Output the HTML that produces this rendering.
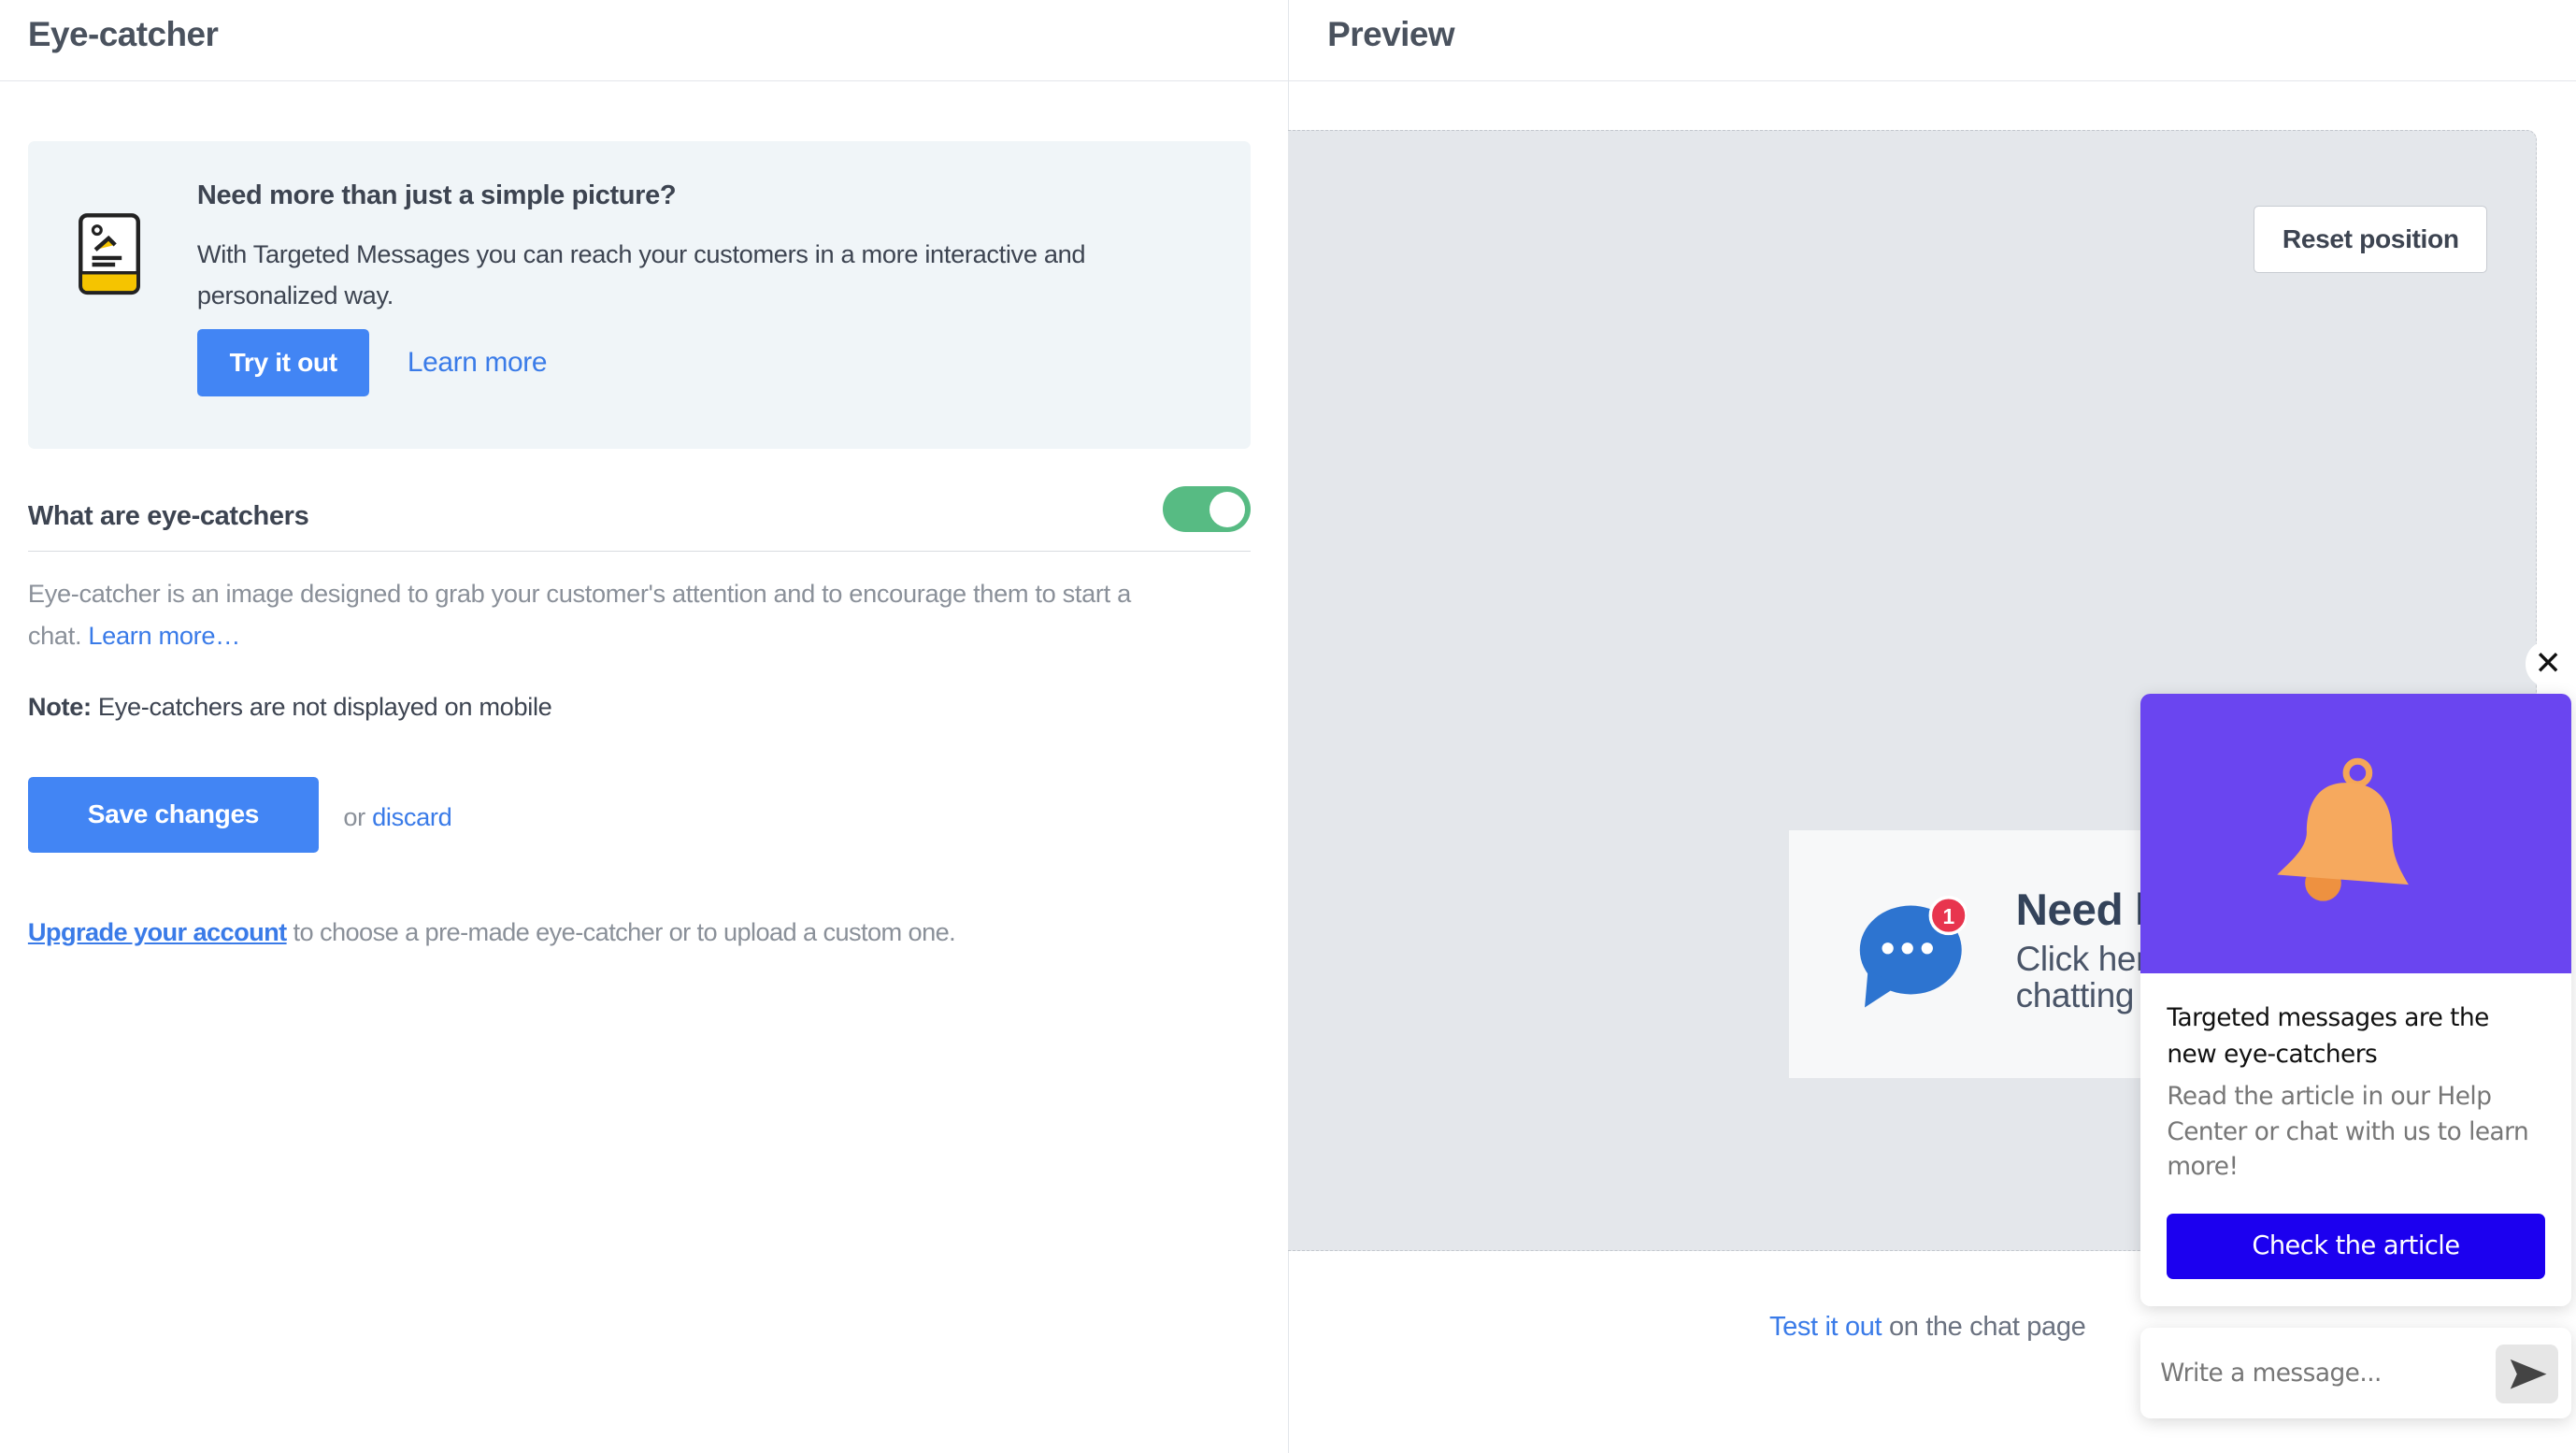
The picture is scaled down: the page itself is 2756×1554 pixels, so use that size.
<!DOCTYPE html>
<html><head><meta charset="utf-8"><style>
*{box-sizing:border-box;margin:0;padding:0}
html,body{width:2756px;height:1554px;overflow:hidden;background:#fff}
#r{zoom:1.75765;width:1568px;height:884px;position:relative;font-family:"Liberation Sans",sans-serif;color:#3d4451;letter-spacing:-.2px}
.a{position:absolute}
.t{font-size:21px;font-weight:bold;color:#4a525e;letter-spacing:-.3px}
.blue{color:#3a7be8}
</style></head><body><div id="r">
<div class="a" style="left:0;top:49px;width:1568px;border-top:1px solid #e3e6ea"></div>
<div class="a" style="left:784px;top:0;height:884px;border-left:1px solid #e3e6ea"></div>
<div class="a t" style="left:17px;top:9px">Eye-catcher</div>
<div class="a t" style="left:808px;top:9px">Preview</div>

<div class="a" style="left:17px;top:86px;width:744px;height:187px;background:#f0f5f8;border-radius:4px"></div>
<svg class="a" style="left:46px;top:128px" width="42" height="52" viewBox="0 0 42 52"><rect x="3" y="3" width="35" height="47" rx="4" fill="#fff" stroke="#222" stroke-width="2.5"/><path d="M4 38h33v8a3 3 0 0 1-3 3H7a3 3 0 0 1-3-3z" fill="#f5c400"/><path d="M4 38h33" stroke="#222" stroke-width="2"/><circle cx="13" cy="12" r="2.5" fill="none" stroke="#222" stroke-width="1.8"/><path d="M12 24l8-7 4 4" stroke="#222" stroke-width="2.5" fill="#f5c400"/><path d="M10 29h18M10 33h14" stroke="#222" stroke-width="2.5"/></svg>
<div class="a" style="left:120px;top:110px;font-size:16.5px;font-weight:bold;color:#3d4451">Need more than just a simple picture?</div>
<div class="a" style="left:120px;top:142px;width:600px;font-size:15.5px;line-height:25px">With Targeted Messages you can reach your customers in a more interactive and personalized way.</div>
<div class="a" style="left:120px;top:200px;width:105px;height:41px;background:#4285f4;border-radius:3px;color:#fff;font-size:16px;font-weight:bold;text-align:center;line-height:41px">Try it out</div>
<div class="a blue" style="left:248px;top:211px;font-size:17px">Learn more</div>

<div class="a" style="left:17px;top:305px;font-size:16.5px;font-weight:bold">What are eye-catchers</div>
<div class="a" style="left:708px;top:296px;width:53px;height:28px;border-radius:14px;background:#57bb83"><div class="a" style="right:3px;top:3px;width:22px;height:22px;border-radius:50%;background:#fff"></div></div>
<div class="a" style="left:17px;top:335px;width:744px;border-top:1px solid #d8dce0"></div>
<div class="a" style="left:17px;top:348px;width:695px;font-size:15.5px;line-height:26px;color:#8a9099">Eye-catcher is an image designed to grab your customer's attention and to encourage them to start a chat. <span class="blue">Learn more…</span></div>
<div class="a" style="left:17px;top:421px;font-size:15.5px"><b>Note:</b> Eye-catchers are not displayed on mobile</div>
<div class="a" style="left:17px;top:473px;width:177px;height:46px;background:#4285f4;border-radius:3px;color:#fff;font-size:16px;font-weight:bold;text-align:center;line-height:46px">Save changes</div>
<div class="a" style="left:209px;top:488px;font-size:15.5px;color:#8a9099">or <span class="blue">discard</span></div>
<div class="a" style="left:17px;top:558px;font-size:15.5px;color:#8a9099;letter-spacing:-.35px"><span class="blue" style="text-decoration:underline;font-weight:bold">Upgrade your account</span> to choose a pre-made eye-catcher or to upload a custom one.</div>

<div class="a" style="left:784px;top:79px;width:760px;height:682px;background:#e4e7eb;border:1px dashed #c4c8ce;border-left:none;border-radius:0 6px 0 0"></div>
<div class="a" style="left:1372px;top:125px;width:142px;height:41px;background:#fff;border:1px solid #c8ccd2;border-radius:3px;text-align:center;line-height:40px;font-size:16px;font-weight:bold;color:#3d4451">Reset position</div>
<div class="a" style="left:1089px;top:505px;width:216px;height:151px;background:#f7f8f9;overflow:hidden">
<svg class="a" style="left:42px;top:40px" width="66" height="70" viewBox="0 0 66 70"><ellipse cx="32" cy="33" rx="31" ry="27" fill="#2d74d0"/><path d="M6 45L4 68 24 55z" fill="#2d74d0"/><circle cx="18" cy="32" r="3.5" fill="#fff"/><circle cx="30" cy="32" r="3.5" fill="#fff"/><circle cx="42" cy="32" r="3.5" fill="#fff"/><circle cx="55" cy="12" r="11" fill="#e8354e" stroke="#fff" stroke-width="2"/><text x="55" y="17" font-size="13" font-weight="bold" fill="#fff" text-anchor="middle" font-family="Liberation Sans">1</text></svg>
<div class="a" style="left:138px;top:33px;font-size:27px;font-weight:bold;color:#34435a;white-space:nowrap">Need help?</div>
<div class="a" style="left:138px;top:68px;font-size:21px;line-height:22px;color:#4a5568;white-space:nowrap">Click here to start<br>chatting</div>
</div>
<div class="a" style="left:1077px;top:798px;font-size:16.5px;color:#6b7280"><span class="blue">Test it out</span> on the chat page</div>

<div class="a" style="left:1537px;top:390px;width:28px;height:28px;border-radius:50%;background:#fff;font-size:20px;text-align:center;line-height:28px;color:#111">✕</div>
<div class="a" style="left:1303px;top:422px;width:262px;height:373px;background:#fff;border-radius:6px;box-shadow:0 2px 10px rgba(0,0,0,.15);overflow:hidden">
<div style="height:170px;background:#6a45f0;position:relative">
<svg class="a" style="left:80px;top:38px" width="90" height="90" viewBox="0 0 90 90"><circle cx="52" cy="10" r="7" fill="none" stroke="#f5a657" stroke-width="4"/><circle cx="31" cy="77" r="11" fill="#ee9140"/><path d="M45 16c-18 0-24 14-24 30 0 10-10 18-18 26l80 6c-6-10-10-18-10-30C73 28 65 16 45 16z" fill="#f6a95e"/></svg>
</div>
<div style="padding:17px 16px 0;font-family:'DejaVu Sans',sans-serif;letter-spacing:-.3px">
<div style="font-size:15px;line-height:22px;color:#111">Targeted messages are the new eye-catchers</div>
<div style="font-size:15px;line-height:21.5px;color:#777;margin-top:4px">Read the article in our Help Center or chat with us to learn more!</div>
<div style="margin-top:17px;height:40px;background:#1c00ef;border-radius:4px;color:#fff;text-align:center;line-height:40px;font-size:15.5px">Check the article</div>
</div></div>
<div class="a" style="left:1303px;top:808px;width:262px;height:55px;background:#fff;border-radius:6px;box-shadow:0 2px 10px rgba(0,0,0,.15)">
<div class="a" style="left:12px;top:19px;font-size:15px;color:#777;font-family:'DejaVu Sans',sans-serif;letter-spacing:-.3px">Write a message...</div>
<div class="a" style="left:216px;top:10px;width:38px;height:36px;background:#e6e6e6;border-radius:5px"><svg width="38" height="36" viewBox="0 0 38 36"><path d="M9 9l22 9-22 9 4-9z" fill="#444"/></svg></div>
</div>
</div></body></html>
